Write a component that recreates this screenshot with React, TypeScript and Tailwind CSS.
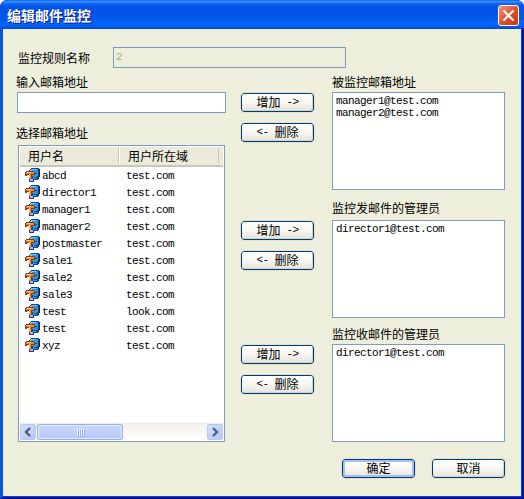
import * as React from 'react';
import clsx from 'clsx';

type MailUser = {
  name: string;
  domain: string;
};

const users: MailUser[] = [
  { name: 'abcd', domain: 'test.com' },
  { name: 'director1', domain: 'test.com' },
  { name: 'manager1', domain: 'test.com' },
  { name: 'manager2', domain: 'test.com' },
  { name: 'postmaster', domain: 'test.com' },
  { name: 'sale1', domain: 'test.com' },
  { name: 'sale2', domain: 'test.com' },
  { name: 'sale3', domain: 'test.com' },
  { name: 'test', domain: 'look.com' },
  { name: 'test', domain: 'test.com' },
  { name: 'xyz', domain: 'test.com' },
];

const monitored = ['manager1@test.com', 'manager2@test.com'];
const sendManagers = ['director1@test.com'];
const receiveManagers = ['director1@test.com'];

function UserIcon() {
  return (
    <svg width="15" height="15" viewBox="0 0 15 15" shapeRendering="crispEdges" className="shrink-0">
      <path d="M5 1h1V0h8v9h-1v3H8v-1H5V4H4V2h1z" fill="#0c4a80" />
      <path d="M5 2h1V1h7v7h-1v3H8V8H5z" fill="#2c98e4" />
      <path d="M6 1h5v1H6zM5 2h2v1H5z" fill="#70ccf8" />
      <path d="M14 1h1v8h-1v2h-1V9h1z" fill="#08203c" />
      <path d="M10 5h2v1h-2zM9 9h3v1H9z" fill="#0c4a80" />
      <path d="M0 4h1V3h8v1h1v3H7v5H4V7H2v1H0z" fill="#8a3c10" />
      <path d="M1 4h8v2H1zM4 6h2v5H4z" fill="#f88428" />
      <path d="M2 4h4v1H2zM4 6h1v4H4z" fill="#ffcc90" />
      <path d="M4 11h1v3H4zM5 13h4v1H5zM8 11h1v2H8z" fill="#2838a0" />
      <path d="M5 11h3v2H5z" fill="#a8b8f0" />
    </svg>
  );
}

function Label({ children, className }: { children: React.ReactNode; className?: string }) {
  return <div className={clsx('h-4 whitespace-nowrap text-[12px] leading-4', className)}>{children}</div>;
}

function Mono({ children, className }: { children: React.ReactNode; className?: string }) {
  return (
    <span className={clsx("whitespace-pre font-['Liberation_Mono',monospace] text-[11px] tracking-[-0.6px]", className)}>
      {children}
    </span>
  );
}

function PushButton({ children, isDefault }: { children: React.ReactNode; isDefault?: boolean }) {
  return (
    <button
      type="button"
      className={clsx(
        'flex h-[19px] w-[73px] items-center justify-center rounded-[3px] border border-[#003c74] bg-linear-to-b from-white via-[#f7f6f1] to-[#e6e3da] pb-[2px] text-[12px] leading-none outline outline-[#e3e1d2]',
        isDefault ? 'shadow-[inset_0_0_0_2px_#a4c0f4,inset_0_-2px_0_#6982ee]' : 'shadow-[inset_-1px_-1px_0_#d6d0c5]',
      )}
    >
      {children}
    </button>
  );
}

function TransferButtons() {
  return (
    <div className="flex flex-col gap-[11px]">
      <PushButton>
        <span>增加</span>
        <Mono className="ml-1.5 pt-[2px]">-&gt;</Mono>
      </PushButton>
      <PushButton>
        <Mono className="mr-1.5 pt-[2px]">&lt;-</Mono>
        <span>删除</span>
      </PushButton>
    </div>
  );
}

function AddressList({ items }: { items: string[] }) {
  return (
    <div className="flex h-[98px] w-[173px] flex-col border border-[#7f9db9] bg-white pt-[2px] pl-[3px]">
      {items.map((item) => (
        <Mono key={item} className="h-3 leading-3">
          {item}
        </Mono>
      ))}
    </div>
  );
}

function ScrollArrow({ direction }: { direction: 'left' | 'right' }) {
  return (
    <div className="flex h-4 w-4 items-center justify-center rounded-[2px] border border-[#b7caf5] bg-linear-to-br from-[#d2dffd] to-[#b3c8f8]">
      <svg width="8" height="10" viewBox="0 0 8 10" fill="none" stroke="#4d6185" strokeWidth="2.4">
        <path d={direction === 'left' ? 'M6 1 2 5 6 9' : 'M2 1 6 5 2 9'} />
      </svg>
    </div>
  );
}

function UserList() {
  return (
    <div className="ml-px flex h-[297px] w-[207px] flex-col border border-[#7f9db9] bg-white p-px">
      <div className="flex h-[20px] w-[203px] border-b-2 border-[#cbc7b8] bg-[#ebeadb] text-[12px] leading-[19px]">
        <div className="mt-px flex h-[15px] w-[99px] items-center border-r border-[#c7c5b2] pl-[8px]">用户名</div>
        <div className="mt-px flex h-[15px] w-[100px] items-center border-r border-[#c7c5b2] border-l border-l-white pl-[8px]">
          用户所在域
        </div>
      </div>
      <div className="grow">
        {users.map((user, index) => (
          <div key={index} className="flex h-[17px] items-center pl-[5px]">
            <UserIcon />
            <Mono className="ml-[2px] w-[84px] pt-[2px]">{user.name}</Mono>
            <Mono className="pt-[2px]">{user.domain}</Mono>
          </div>
        ))}
      </div>
      <div className="flex h-[17px] w-[203px] items-center border-t border-[#eeede5] bg-linear-to-b from-[#f3f1ec] to-[#fefefb]">
        <ScrollArrow direction="left" />
        <div className="ml-px flex h-4 w-[86px] items-center justify-center gap-px rounded-[2px] border border-[#98b0e8] bg-linear-to-b from-[#cad8fd] to-[#b5c8f7] shadow-[inset_0_0_0_1px_#dfe9ff]">
          {[0, 1, 2, 3].map((grip) => (
            <span key={grip} className="h-[7px] w-px bg-[#eef4fe] shadow-[1px_1px_0_#8cb0f8]" />
          ))}
        </div>
        <div className="ml-auto">
          <ScrollArrow direction="right" />
        </div>
      </div>
    </div>
  );
}

export default function App() {
  return (
    <div className="flex h-[499px] w-[524px] flex-col overflow-hidden rounded-t-[7px] bg-[#0831d9] font-['Noto_Sans_CJK_SC',sans-serif] text-black">
      <div className="flex h-[29px] shrink-0 items-center justify-between bg-[linear-gradient(180deg,#0a5ce8_0%,#3f93ff_6%,#1268f2_12%,#0353e4_22%,#0055e8_60%,#0265fc_82%,#0060f8_90%,#0145c8_100%)] pr-[5px] pl-[7px]">
        <h1 className="text-[14px] leading-none font-bold text-white [text-shadow:1px_1px_0_#0a1883]">编辑邮件监控</h1>
        <button
          type="button"
          aria-label="关闭"
          className="mt-[2px] flex h-[21px] w-[21px] items-center justify-center rounded-[3px] border border-white bg-linear-to-br from-[#f0907a] via-[#e2512e] to-[#c8340c]"
        >
          <svg width="13" height="13" viewBox="0 0 13 13" stroke="#fff" strokeWidth="2.1">
            <path d="M1.5 1.5l10 10M11.5 1.5l-10 10" />
          </svg>
        </button>
      </div>

      <div className="flex grow flex-col border-r-2 border-b-2 border-l-3 border-t-0 border-[#00138c] border-l-[#0855dd] bg-[#eeeedd] pt-[18px] pl-[14px] shadow-[inset_-1px_-1px_0_#0144e8]">
        <div className="flex h-[21px] items-center">
          <Label className="ml-px w-[95px]">监控规则名称</Label>
          <div className="flex h-[21px] w-[233px] border border-[#7f9db9] px-[2px] pt-[3px]">
            <Mono className="h-3 leading-3 text-[#aca899]">2</Mono>
          </div>
        </div>

        <div className="mt-[6px] flex">
          <div className="w-[224px]">
            <Label className="-ml-px">输入邮箱地址</Label>
            <div className="mt-[2px] h-[21px] w-[209px] border border-[#7f9db9] bg-white" />
            <Label className="mt-[12px] -ml-px">选择邮箱地址</Label>
            <div className="mt-[4px]">
              <UserList />
            </div>
          </div>

          <div className="flex w-[91px] flex-col pt-[19px]">
            <TransferButtons />
            <div className="mt-[79px]">
              <TransferButtons />
            </div>
            <div className="mt-[75px]">
              <TransferButtons />
            </div>
          </div>

          <div>
            <Label>被监控邮箱地址</Label>
            <div className="mt-[2px]">
              <AddressList items={monitored} />
            </div>
            <Label className="mt-[10px]">监控发邮件的管理员</Label>
            <div className="mt-[4px]">
              <AddressList items={sendManagers} />
            </div>
            <Label className="mt-[8px]">监控收邮件的管理员</Label>
            <div className="mt-[2px]">
              <AddressList items={receiveManagers} />
            </div>
          </div>
        </div>

        <div className="mt-[17px] flex gap-[17px] pl-[325px]">
          <PushButton isDefault>确定</PushButton>
          <PushButton>取消</PushButton>
        </div>
      </div>
    </div>
  );
}
